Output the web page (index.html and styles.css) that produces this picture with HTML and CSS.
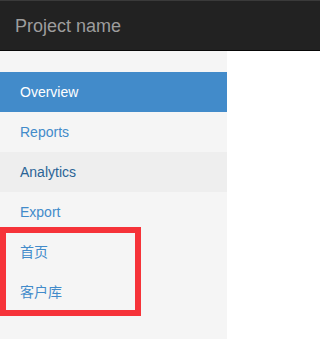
FILE: index.html
```html
<!DOCTYPE html>
<html lang="zh">
<head>
<meta charset="utf-8">
<title>Project name</title>
<link rel="stylesheet" href="styles.css">
</head>
<body>
<header class="navbar">
  <a class="brand" href="#">Project name</a>
</header>
<div class="layout">
  <aside class="sidebar">
    <ul class="nav">
      <li class="active"><a href="#">Overview</a></li>
      <li><a href="#">Reports</a></li>
      <li class="hover"><a href="#">Analytics</a></li>
      <li><a href="#">Export</a></li>
      <li><a href="#">首页</a></li>
      <li><a href="#">客户库</a></li>
    </ul>
    <div class="highlight"></div>
  </aside>
</div>
</body>
</html>
```
FILE: styles.css
```css
html, body {
  margin: 0;
  padding: 0;
  height: 100%;
}
body {
  font-family: "Liberation Sans", Arial, "Noto Sans CJK SC", sans-serif;
  font-size: 14px;
  line-height: 20px;
  color: #333;
  background: #fff;
  display: flex;
  flex-direction: column;
}
.navbar {
  height: 49px;
  background: #222;
  border-top: 1px solid #3a3a3a;
  border-bottom: 1px solid #080808;
  display: flex;
  align-items: center;
  flex-shrink: 0;
}
.brand {
  padding: 0 15px;
  font-size: 18px;
  line-height: 20px;
  color: #9d9d9d;
  text-decoration: none;
}
.layout {
  flex: 1;
  display: flex;
}
.sidebar {
  position: relative;
  width: 227px;
  background: #f5f5f5;
  padding-top: 21px;
}
.nav {
  list-style: none;
  margin: 0;
  padding: 0;
}
.nav a {
  display: block;
  padding: 10px 20px;
  color: #428bca;
  text-decoration: none;
}
.nav .active a {
  background: #428bca;
  color: #fff;
}
.nav .hover a {
  background: #eee;
  color: #2a6496;
}
.highlight {
  position: absolute;
  left: 0;
  top: 176px;
  width: 129px;
  height: 77px;
  border: 6px solid #f63339;
  pointer-events: none;
}
```
